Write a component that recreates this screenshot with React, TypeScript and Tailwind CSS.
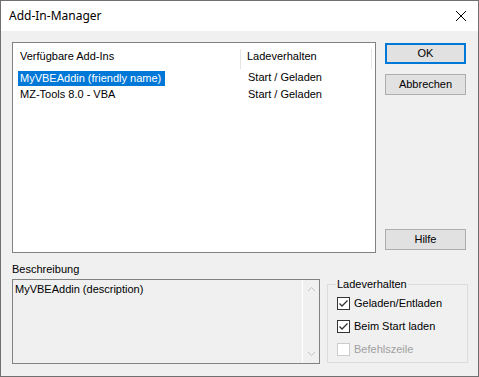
import React from "react";

const ui = { fontFamily: '"Liberation Sans", Arial, sans-serif' };

function Check({ checked, disabled }: { checked?: boolean; disabled?: boolean }) {
  return (
    <span
      className={`inline-flex w-[13px] h-[13px] border bg-white items-center justify-center ${
        disabled ? "border-[#cccccc]" : "border-[#333333]"
      }`}
    >
      {checked && (
        <svg width="11" height="11" viewBox="0 0 11 11">
          <path d="M1.5 5.5 L4 8 L9.5 2.5" fill="none" stroke="#333333" strokeWidth="1.3" />
        </svg>
      )}
    </span>
  );
}

export default function App() {
  return (
    <div
      className="w-[479px] h-[377px] border border-[#707070] flex flex-col bg-[#f0f0f0] text-[11px] text-black"
      style={ui}
    >
      {/* title bar */}
      <div className="h-[30px] bg-white flex items-center justify-between pl-[8px] pr-[10px] shrink-0">
        <span className="text-[12px] text-black" style={{ fontFamily: '"Noto Sans", "Open Sans", sans-serif' }}>
          Add-In-Manager
        </span>
        <svg width="12" height="12" viewBox="0 0 12 12" className="mr-[1px]">
          <path d="M1 1 L11 11 M11 1 L1 11" stroke="#000" strokeWidth="1" />
        </svg>
      </div>

      {/* body */}
      <div className="flex-1 flex flex-col pl-[11px] pt-[11px]">
        {/* top row */}
        <div className="flex">
          <div className="w-[364px] h-[211px] border border-[#828282] bg-white flex flex-col">
            <div className="h-[27px] flex items-start pt-[6px]">
              <div className="w-[228px] h-[20px] pl-[7px] border-r border-[#e5e5e5] leading-[13px] pt-[1px]">
                Verfügbare Add-Ins
              </div>
              <div className="w-[131px] h-[20px] pl-[6px] border-r border-[#e5e5e5] leading-[13px] pt-[1px]">
                Ladeverhalten
              </div>
            </div>
            <div className="h-[16px] flex">
              <div className="w-[228px] pl-[5px]">
                <span className="inline-block h-[15px] leading-[15px] bg-[#0078d7] text-white pl-[2px] pr-[4px]">
                  MyVBEAddin (friendly name)
                </span>
              </div>
              <div className="pl-[7px] leading-[15px]">Start / Geladen</div>
            </div>
            <div className="h-[16px] flex">
              <div className="w-[228px] pl-[7px] leading-[16px]">MZ-Tools 8.0 - VBA</div>
              <div className="pl-[7px] leading-[16px]">Start / Geladen</div>
            </div>
          </div>

          <div className="ml-[9px] pt-[1px] flex flex-col">
            <div className="w-[81px] h-[21px] border-2 border-[#0078d7] bg-[#e1e1e1] flex items-center justify-center">
              OK
            </div>
            <div className="mt-[10px] w-[81px] h-[21px] border border-[#adadad] bg-[#e1e1e1] flex items-center justify-center">
              Abbrechen
            </div>
            <div className="mt-[134px] w-[81px] h-[21px] border border-[#adadad] bg-[#e1e1e1] flex items-center justify-center">
              Hilfe
            </div>
          </div>
        </div>

        {/* bottom row */}
        <div className="flex mt-[10px]">
          <div className="flex flex-col w-[308px]">
            <div className="h-[13px] leading-[13px]">Beschreibung</div>
            <div className="mt-[3px] h-[85px] border border-[#828282] flex">
              <div className="flex-1 pl-[2px] pt-[3px] leading-[13px]">MyVBEAddin (description)</div>
              <div className="w-[17px] border-l border-white flex flex-col justify-between items-center py-[6px]">
                <svg width="9" height="6" viewBox="0 0 9 6">
                  <path d="M1 5 L4.5 1.5 L8 5" fill="none" stroke="#c4c4c4" strokeWidth="1" />
                </svg>
                <svg width="9" height="6" viewBox="0 0 9 6">
                  <path d="M1 1 L4.5 4.5 L8 1" fill="none" stroke="#c4c4c4" strokeWidth="1" />
                </svg>
              </div>
            </div>
          </div>

          <div className="ml-[7px] mt-[21px] w-[141px] h-[79px] border border-[#dcdcdc] relative flex flex-col pl-[9px] pt-[12px] gap-[10px]">
            <span className="absolute left-[8px] top-[-7px] bg-[#f0f0f0] px-[1px] leading-[13px]">Ladeverhalten</span>
            <div className="flex items-center h-[13px] gap-[4px]">
              <Check checked />
              <span className="leading-[13px]">Geladen/Entladen</span>
            </div>
            <div className="flex items-center h-[13px] gap-[4px]">
              <Check checked />
              <span className="leading-[13px]">Beim Start laden</span>
            </div>
            <div className="flex items-center h-[13px] gap-[4px]">
              <Check disabled />
              <span className="leading-[13px] text-[#a0a0a0]">Befehlszeile</span>
            </div>
          </div>
        </div>
      </div>
    </div>
  );
}
